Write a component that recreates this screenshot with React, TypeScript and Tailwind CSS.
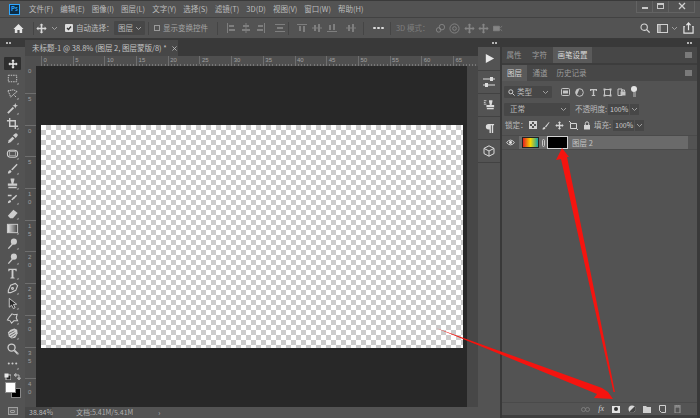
import React from "react";

const menus = ["文件(F)", "编辑(E)", "图像(I)", "图层(L)", "文字(Y)", "选择(S)", "滤镜(T)", "3D(D)", "视图(V)", "窗口(W)", "帮助(H)"];
const rulerNums = [0, 5, 10, 15, 20, 25, 30, 35, 40, 45, 50, 55, 60, 65];
const vNums = ["5", "0", "5", "10", "15", "20", "25", "30", "35", "40"];

const C = "#cdcdcd";
const toolShapes: React.ReactNode[] = [
  <rect key="m" x="2.5" y="3.5" width="9" height="7" fill="none" stroke={C} strokeDasharray="1.6 1" />,
  <path key="l" d="M2 4 L8 3 L12 5 L8 8 L5 11 L4 8 Z M8 8 L11 11" fill="none" stroke={C} strokeWidth="1" strokeDasharray="1.6 .7" />,
  <g key="w"><path d="M2 12 L8 6" stroke={C} strokeWidth="2" /><path d="M10 1 L10.8 3.2 L13 4 L10.8 4.8 L10 7 L9.2 4.8 L7 4 L9.2 3.2 Z" fill={C} /></g>,
  <path key="c" d="M4 1 V10 H13 M1 4 H10 V13" fill="none" stroke={C} strokeWidth="1.5" />,
  <g key="e" fill={C}><path d="M2 12 L3 9 L7 5 L9 7 L5 11 Z" /><path d="M7.5 3.5 L10 1.5 Q11 1 12 2 Q13 3 12.5 4 L10.5 6.5 Z" /></g>,
  <g key="h" fill="none" stroke={C}><rect x="1.5" y="3.5" width="11" height="7.5" rx="3.5" strokeWidth="1.2" /><rect x="4" y="5" width="6" height="4.5" strokeWidth=".7" /></g>,
  <g key="b" fill={C}><path d="M2 12.5 C2 10 3 9 4.5 8.5 L6 10 C5.5 11.5 4 12.5 2 12.5 Z" /><path d="M5.5 8 L11.5 2 L12.5 3 L7 9 Z" /></g>,
  <g key="s" fill={C}><path d="M5 1.5 H9 V3 L8 7 H12 V9.5 H2 V7 H6 L5 3 Z" /><rect x="2.5" y="10.5" width="9" height="1.6" /></g>,
  <g key="hb" fill={C}><path d="M2 12 C2 10 3 9 4.5 8.5 L5.5 10 C5 11.5 3.500 12 2 12 Z" /><path d="M5.500 8 L11 3 L12 4 L7 9 Z" /><path d="M2 3 H6 V4.500 H2 Z M7 6 L9 6 L9 7.500 Z" /></g>,
  <path key="er" d="M2 9.500 L8 3 L12.500 6.500 L7.500 12 H4.500 Z" fill={C} />,
  <g key="g"><rect x="1.500" y="2.500" width="11" height="9" fill="url(#tg)" stroke={C} /></g>,
  <g key="d" fill={C}><circle cx="8.500" cy="5" r="3.300" /><path d="M2 12 L6.500 7 L7.500 8 L3 13 Z" /></g>,
  <g key="bu" fill={C}><circle cx="8.500" cy="5" r="3.300" /><path d="M2 12 L6.500 7 L7.500 8 L3 13 Z" /></g>,
  <path key="t" d="M2.500 2 H11.500 V4.500 H10.500 L10 3.200 H8 V11 L9.300 11.500 V12.300 H4.700 V11.500 L6 11 V3.200 H4 L3.500 4.500 H2.500 Z" fill={C} />,
  <g key="p" fill="none" stroke={C} strokeWidth="1.200"><path d="M10 1.500 L12.500 4 L10.500 9 L5 11.500 L2.500 11.500 L2.500 9 L5 3.500 Z" /><circle cx="7" cy="7" r="1" /></g>,
  <path key="se" d="M3.500 1.500 V11 L6 8.800 L8 12.500 L9.800 11.500 L8 8 L11.500 7.800 Z" fill="#2b2b2b" stroke={C} />,
  <path key="sh" d="M6.500 2 L9 3 L12 2.500 L11 6.500 L12.500 9.500 L8.500 9.500 L6 12 L4.500 9.500 L1.500 8.500 L3.500 5.500 Z" fill="none" stroke={C} strokeWidth="1.100" />,
  <g key="ha"><path d="M2 6 L5 3 L9 1.500 L12 3 L12.500 7 L10 11.500 L6 12.500 L3 10 Z" fill={C} /><path d="M3 7 L9 4 M4 9.500 L10 6 M6 11.500 L11 8" stroke="#4a4a4a" strokeWidth=".8" /></g>,
  <g key="z" fill="none" stroke={C}><circle cx="6" cy="6" r="3.800" strokeWidth="1.400" /><path d="M9 9 L12.500 12.500" strokeWidth="2" /></g>,
  <g key="do" fill={C}><circle cx="3" cy="7" r="1.100" /><circle cx="7" cy="7" r="1.100" /><circle cx="11" cy="7" r="1.100" /></g>,
];

const Chev = ({ className = "", color = "#a0a0a0" }: { className?: string; color?: string }) => (
  <svg width="7" height="5" viewBox="0 0 7 5" className={`shrink-0 ${className}`}><path d="M1 1 L3.500 3.500 L6 1" fill="none" stroke={color} /></svg>
);
const Move4 = ({ size = 11, color = "#d8d8d8" }: { size?: number; color?: string }) => (
  <svg width={size} height={size} viewBox="0 0 14 14" className="shrink-0"><path d="M7 0.500 L9.500 3 H8 V6 H11 V4.500 L13.500 7 L11 9.500 V8 H8 V11 H9.500 L7 13.500 L4.500 11 H6 V8 H3 V9.500 L0.500 7 L3 4.500 V6 H6 V3 H4.500 Z" fill={color} /></svg>
);
const Sep = ({ cls }: { cls: string }) => <span className={`h-[13px] w-px shrink-0 bg-[#454545] ${cls}`} />;
const Grip = () => <span className="flex gap-[1px]"><span className="h-[2px] w-[2px] bg-[#b5b5b5]" /><span className="h-[2px] w-[2px] bg-[#b5b5b5]" /></span>;
const PanelMenu = () => <span className="ml-auto mr-[5px] h-[6px] w-[7px] self-center bg-[#7a7a7a]" />;

function Align({ d }: { d: string }) {
  return <span className="flex w-[15.300px] shrink-0 justify-center"><svg width="10" height="10" viewBox="0 0 10 10"><path d={d} fill="#7e7e7e" /></svg></span>;
}
const H1 = "M1 0 H2 V10 H1 Z M3 2 H8 V4 H3 Z M3 6 H9 V8 H3 Z";
const H2 = "M4.500 0 H5.500 V10 H4.500 Z M2 2 H8 V4 H2 Z M1 6 H9 V8 H1 Z";
const H3 = "M8 0 H9 V10 H8 Z M2 2 H7 V4 H2 Z M1 6 H7 V8 H1 Z";
const V1 = "M0 1 H10 V2 H0 Z M2 3 H4 V8 H2 Z M6 3 H8 V9 H6 Z";
const V2 = "M0 4.500 H10 V5.500 H0 Z M2 2 H4 V8 H2 Z M6 1 H8 V9 H6 Z";
const V3 = "M0 8 H10 V9 H0 Z M2 2 H4 V7 H2 Z M6 1 H8 V7 H6 Z";
const DIST = "M0 1 H10 V2 H0 Z M0 8 H10 V9 H0 Z M2 4 H8 V6 H2 Z";

export default function App() {
  return (
    <div className="flex h-[418px] w-[700px] flex-col overflow-hidden bg-[#393939] text-[#bcbcbc] [font-family:'Noto_Sans_CJK_SC','Liberation_Sans',sans-serif] relative">
      {/* Menu bar */}
      <div className="flex h-[18px] shrink-0 items-center border-b border-[#424242] border-t border-t-[#3a3a3a] bg-[#535353] pl-[9px] text-[7.500px]">
        <span className="mr-[9px] flex h-[11px] w-[11px] items-center justify-center border border-[#31a8ff] bg-[#0c2c44] text-[6px] font-bold leading-none text-[#31a8ff]">Ps</span>
        <div className="flex gap-[7px]">{menus.map((m) => <span key={m} className="whitespace-nowrap leading-none">{m}</span>)}</div>
        <div className="ml-auto mr-[5px] -mt-[5px] flex h-[12px] items-center border-b border-l border-r border-[#636363] text-[#c8c8c8]">
          <span className="flex h-full w-[16px] items-end justify-center border-r border-[#636363] pb-[3px]"><span className="h-[2px] w-[6px] bg-[#c8c8c8]" /></span>
          <span className="flex h-full w-[16px] items-center justify-center border-r border-[#636363]"><span className="h-[6px] w-[7px] border border-t-2 border-[#c8c8c8]" /></span>
          <span className="flex h-full w-[25px] items-center justify-center"><svg width="8" height="8" viewBox="0 0 8 8"><path d="M1 1 L7 7 M7 1 L1 7" stroke="#d0d0d0" strokeWidth="1.300" /></svg></span>
        </div>
      </div>
      {/* Options bar */}
      <div className="flex h-[21px] shrink-0 items-center border-b border-[#3a3a3a] bg-[#535353] text-[7.500px]">
        <svg width="11" height="11" viewBox="0 0 12 12" className="ml-[13px] shrink-0"><path d="M6 1 L11.500 6.500 H10 V11 H7.200 V7.500 H4.800 V11 H2 V6.500 H0.500 Z" fill="#e4e4e4" /></svg>
        <Sep cls="ml-[9px]" />
        <span className="ml-[2px]"><Move4 /></span>
        <Chev className="ml-[4px]" />
        <span className="ml-[7px] flex h-[8px] w-[8px] shrink-0 items-center justify-center rounded-[1px] bg-[#dcdcdc]"><svg width="6" height="6" viewBox="0 0 6 6"><path d="M1 3 L2.500 4.500 L5 1.500" fill="none" stroke="#333" strokeWidth="1.300" /></svg></span>
        <span className="ml-[3px] w-[38px] shrink-0 whitespace-nowrap">自动选择：</span>
        <span className="flex h-[14px] w-[31px] shrink-0 items-center justify-between rounded-[1px] bg-[#474747] pl-[4px] pr-[3px]">图层<Chev /></span>
        <Sep cls="ml-[3px]" />
        <span className="ml-[5px] h-[6px] w-[6px] shrink-0 border border-[#9a9a9a]" />
        <span className="ml-[3px] w-[54px] shrink-0 whitespace-nowrap text-[#a5a5a5]">显示变换控件</span>
        <Sep cls="" />
        <span className="ml-[5px] flex">
          <Align d={H1} /><Align d={H2} /><Align d={H3} /><span className="w-[3px]" /><Align d={DIST} />
        </span>
        <Sep cls="ml-[1px]" />
        <span className="ml-[5px] flex">
          <Align d={V1} /><Align d={V2} /><Align d={V3} /><span className="w-[3px]" /><Align d={V2} />
        </span>
        <Sep cls="ml-[5px]" />
        <span className="ml-[9px] flex gap-[1.500px]"><i className="h-[2.500px] w-[2.500px] rounded-full bg-[#dcdcdc]" /><i className="h-[2.500px] w-[2.500px] rounded-full bg-[#dcdcdc]" /><i className="h-[2.500px] w-[2.500px] rounded-full bg-[#dcdcdc]" /></span>
        <Sep cls="ml-[6px]" />
        <span className="ml-[5px] w-[36px] shrink-0 whitespace-nowrap text-[#7e7e7e]">3D 模式：</span>
        <span className="ml-[3px] flex items-center gap-[3.500px]">
          <svg width="11" height="11" viewBox="0 0 12 12"><g fill="none" stroke="#858585"><circle cx="7.500" cy="4.500" r="3" /><circle cx="4" cy="7.500" r="2.500" /></g></svg>
          <svg width="11" height="11" viewBox="0 0 12 12"><g fill="none" stroke="#858585"><circle cx="6" cy="6" r="5" /><circle cx="6" cy="6" r="2" /></g></svg>
          <Move4 color="#858585" />
          <Move4 color="#858585" />
          <svg width="11" height="11" viewBox="0 0 12 12"><path d="M0.500 3.500 H7 V8.500 H0.500 Z M8 5 L10 3.500 M8 7 L10 8.500" fill="#858585" stroke="#858585" strokeWidth=".8" /></svg>
        </span>
        <svg width="10" height="10" viewBox="0 0 12 12" className="ml-auto shrink-0"><circle cx="5" cy="5" r="3.800" fill="none" stroke="#d6d6d6" strokeWidth="1.300" /><path d="M8 8 L11.500 11.500" stroke="#d6d6d6" strokeWidth="1.500" /></svg>
        <span className="ml-[7px] flex h-[9px] w-[11px] shrink-0 border border-[#d0d0d0]"><span className="w-[3px] bg-[#9a9a9a]" /></span>
        <Chev className="ml-[3px]" />
        <svg width="11" height="12" viewBox="0 0 12 13" className="ml-[5px] mr-[6px] shrink-0"><path d="M2 5 H1 V12 H11 V5 H10 M6 9 V1.500 M3.800 3.500 L6 1 L8.200 3.500" fill="none" stroke="#e4e4e4" strokeWidth="1.300" /></svg>
      </div>
      {/* Body */}
      <div className="flex min-h-0 flex-1">
        {/* Toolbar */}
        <div className="flex w-[25px] shrink-0 flex-col">
          <div className="flex h-[8px] shrink-0 items-center pl-[6px]"><Grip /></div>
          <div className="flex flex-1 flex-col items-center bg-[#535353] pt-[10px]">
            <div className="flex h-[14px] shrink-0 items-start justify-center">
              <div className="flex h-[13px] w-[17px] items-center justify-center rounded-[1px] bg-[#2f2f2f]"><Move4 size={10} color="#ededed" /></div>
            </div>
            <svg width="0" height="0" className="absolute"><defs><linearGradient id="tg"><stop offset="0" stopColor="#e8e8e8" /><stop offset="1" stopColor="#444" /></linearGradient></defs></svg>
            {toolShapes.map((s, i) => (
              <span key={i} className="flex h-[15px] shrink-0 items-center justify-center">
                <svg width="13" height="13" viewBox="0 0 14 14">{s}<path d="M13.500 13.500 H11.500 L13.500 11.500 Z" fill="#bdbdbd" /></svg>
              </span>
            ))}
            <span className="flex h-[10px] w-[17px] shrink-0 items-center justify-between">
              <svg width="7" height="7" viewBox="0 0 7 7"><rect x="2" y="2" width="5" height="5" fill="#222" stroke="#ccc" /><rect x=".5" y=".5" width="4" height="4" fill="#e8e8e8" /></svg>
              <svg width="7" height="7" viewBox="0 0 7 7"><path d="M1 2 H5 V6 M0 2 L2 0.500 V3.500 Z M3.500 5 L5 7 L6.500 5 Z" fill="none" stroke="#ccc" strokeWidth=".8" /></svg>
            </span>
            <div className="relative mt-[1px] h-[17px] w-[16px] shrink-0">
              <span className="absolute left-[6px] top-[6px] h-[10px] w-[10px] border border-[#8a8a8a] bg-black" />
              <span className="absolute left-0 top-0 h-[11px] w-[11px] border border-[#8a8a8a] bg-white" />
            </div>
            <span className="mt-[8px] flex h-[8px] w-[10px] shrink-0 items-center justify-center border border-[#a0a0a0] bg-[#646464]"><span className="h-[3px] w-[5px] rounded-[1px] border border-[#a0a0a0]" /></span>
          </div>
        </div>
        {/* Document */}
        <div className="flex w-[453px] shrink-0 flex-col">
          <div className="flex h-[17px] shrink-0 items-end">
            <div className="flex h-[16px] w-[153px] items-center bg-[#474747] pl-[7px] text-[7.500px] text-[#c4c4c4]">
              <span className="whitespace-nowrap">未标题-1 @ 38.8% (图层 2, 图层蒙版/8) *</span>
              <svg width="5" height="5" viewBox="0 0 6 6" className="ml-[5px] shrink-0"><path d="M.5 .5 L5.500 5.500 M5.500 .5 L.5 5.500" stroke="#bbb" /></svg>
            </div>
          </div>
          <div className="flex h-[10px] shrink-0 flex-col overflow-hidden bg-[#4f4f4f] pl-[16px] [font-family:'Liberation_Sans',sans-serif]">
            <div className="flex h-[8px] shrink-0">
              {rulerNums.map((n) => <span key={n} className="w-[31.700px] shrink-0 border-l border-[#6e6e6e] pl-[1.500px] text-[6px] leading-[8px] text-[#a0a0a0]">{n}</span>)}
            </div>
            <div className="h-[2px] bg-[repeating-linear-gradient(90deg,#767676_0_1px,transparent_1px_3.170px)]" />
          </div>
          <div className="flex min-h-0 flex-1">
            <div className="flex w-[11px] shrink-0 flex-col overflow-hidden bg-[#4f4f4f] text-[6px] leading-[8px] text-[#a0a0a0] [font-family:'Liberation_Sans',sans-serif]">
              <div className="h-[27px] shrink-0 pl-[3px] pt-[1px]">0</div>
              {vNums.map((n, i) => (
                <div key={i} className="h-[31.700px] w-full shrink-0 border-t border-[#6e6e6e] pl-[3px] pt-[1px]">
                  {n.split("").map((c, j) => <span key={j} className="block">{c}</span>)}
                </div>
              ))}
            </div>
            <div className="flex flex-1 bg-[#282828] pl-[5px] pt-[59px]">
              <div className="h-[223px] w-[422px] bg-[repeating-conic-gradient(#cccccc_0_25%,#ffffff_0_50%)] bg-[length:10px_10px]" />
            </div>
            <div className="w-[11px] shrink-0 bg-[#474747]" />
          </div>
          <div className="flex h-[11px] shrink-0 items-center bg-[#535353] text-[7px] leading-none">
            <span className="flex h-full w-[27px] shrink-0 items-center bg-[#474747] pl-[4px]">38.84%</span>
            <span className="ml-[24px] whitespace-nowrap text-[#b0b0b0]">文档:5.41M/5.41M</span>
            <span className="ml-[25px]">›</span>
          </div>
        </div>
        {/* Dock */}
        <div className="flex w-[22px] shrink-0 flex-col">
          <div className="flex h-[8px] shrink-0 items-center justify-center pl-[10px]"><Grip /></div>
          <div className="flex flex-1 flex-col items-center bg-[#535353]">
            <span className="flex h-[24px] w-full items-center justify-center border-b border-[#424242]"><svg width="11" height="11" viewBox="0 0 12 12"><path d="M2 1 L11 6 L2 11 Z" fill="#e8e8e8" /></svg></span>
            <span className="flex h-[23px] w-full items-center justify-center border-b border-[#424242]"><svg width="12" height="12" viewBox="0 0 12 12" fill="#dcdcdc"><path d="M0 2.500 H12 V3.500 H0 Z M0 8.500 H12 V9.500 H0 Z" /><rect x="7" y="1" width="3" height="4" /><rect x="2" y="7" width="3" height="4" /></svg></span>
            <span className="flex h-[23px] w-full items-center justify-center border-b border-[#424242]"><svg width="12" height="12" viewBox="0 0 14 14" fill="#dcdcdc"><path d="M7 1.500 H11 V3 L10 7 H13 V9.500 H4 V7 H8 L7 3 Z" /><rect x="4.500" y="10.500" width="8" height="1.500" /><path d="M1 2 H4 M1 4 H3 M1 6 H4" stroke="#dcdcdc" /></svg></span>
            <span className="flex h-[23px] w-full items-center justify-center border-b border-[#424242]"><svg width="11" height="11" viewBox="0 0 12 12" fill="#dcdcdc"><path d="M5 1 H11 V2.500 H10 V11 H8.500 V2.500 H7.500 V11 H6 V7 H5 A3 3 0 0 1 5 1 Z" /></svg></span>
            <span className="flex h-[23px] w-full items-center justify-center border-b border-[#424242]"><svg width="12" height="12" viewBox="0 0 12 12" fill="none" stroke="#dcdcdc"><path d="M6 .8 L11 3.400 V8.600 L6 11.200 L1 8.600 V3.400 Z M1 3.400 L6 6 L11 3.400 M6 6 V11.200" /></svg></span>
          </div>
        </div>
        <div className="w-[2px] shrink-0" />
        {/* Panels */}
        <div className="flex w-[195px] shrink-0 flex-col">
          <div className="flex h-[8px] shrink-0 items-center justify-end pr-[5px]"><Grip /></div>
          <div className="flex h-[16px] shrink-0 items-stretch bg-[#474747] text-[7.500px]">
            <span className="flex w-[24px] items-center justify-center text-[#9d9d9d]">属性</span>
            <span className="flex w-[27px] items-center justify-center text-[#9d9d9d]">字符</span>
            <span className="flex w-[39px] items-center justify-center bg-[#5a5a5a] text-[#d6d6d6]">画笔设置</span>
            <PanelMenu />
          </div>
          <div className="h-[2px] shrink-0 bg-[#3d3d3d]" />
          <div className="flex h-[16px] shrink-0 items-stretch bg-[#474747] text-[7.500px]">
            <span className="flex w-[25px] items-center justify-center bg-[#5a5a5a] text-[#d6d6d6]">图层</span>
            <span className="flex w-[26px] items-center justify-center text-[#9d9d9d]">通道</span>
            <span className="flex w-[37px] items-center justify-center text-[#9d9d9d]">历史记录</span>
            <PanelMenu />
          </div>
          <div className="flex min-h-0 flex-1 flex-col bg-[#535353] text-[7.500px]">
            <div className="flex h-[20px] shrink-0 items-center pl-[2px] pt-[2px]">
              <span className="flex h-[12px] w-[48px] shrink-0 items-center rounded-[1px] bg-[#474747] pl-[4px] pr-[3px]">
                <svg width="7" height="7" viewBox="0 0 8 8" className="shrink-0"><circle cx="3.200" cy="3.200" r="2.300" fill="none" stroke="#ddd" /><path d="M5 5 L7.500 7.500" stroke="#ddd" /></svg>
                <span className="ml-[2px]">类型</span><Chev className="ml-auto" />
              </span>
              <div className="ml-[9px] flex items-center gap-[5px]">
                <svg width="9" height="8" viewBox="0 0 9 8"><rect x=".5" y=".5" width="8" height="7" rx="1" fill="none" stroke="#c4c4c4" /><rect x="2" y="2.500" width="5" height="3" fill="#c4c4c4" /></svg>
                <svg width="9" height="9" viewBox="0 0 9 9"><circle cx="4.500" cy="4.500" r="3.800" fill="none" stroke="#c4c4c4" /><path d="M4.500 .7 A3.800 3.800 0 0 0 1.800 7.200 Z" fill="#c4c4c4" /></svg>
                <svg width="9" height="9" viewBox="0 0 9 9"><path d="M1 1 H8 V3 H7 L6.500 2.300 H5.200 V7 H6.200 V8 H2.800 V7 H3.800 V2.300 H2.500 L2 3 H1 Z" fill="#c4c4c4" /></svg>
                <svg width="9" height="9" viewBox="0 0 9 9"><path d="M2 1.500 H7 M2 7.500 H7 M1.500 2 V7 M7.500 2 V7" stroke="#c4c4c4" /><rect x=".5" y=".5" width="2" height="2" fill="#c4c4c4" /><rect x="6.500" y=".5" width="2" height="2" fill="#c4c4c4" /><rect x=".5" y="6.500" width="2" height="2" fill="#c4c4c4" /><rect x="6.500" y="6.500" width="2" height="2" fill="#c4c4c4" /></svg>
                <svg width="9" height="10" viewBox="0 0 9 10"><path d="M1 2 H5 V8.500 H1 Z" fill="none" stroke="#c4c4c4" /><rect x="3.500" y="4.500" width="5" height="4" fill="#c4c4c4" /><path d="M4.500 4.500 V3 H7.500 V4.500" fill="none" stroke="#c4c4c4" /></svg>
              </div>
              <span className="ml-[5px] flex h-[12px] w-[6px] shrink-0 flex-col items-center"><span className="h-[6px] w-[6px] rounded-full bg-[#e4e4e4]" /><span className="h-[5px] w-[3px] bg-[#8a8a8a]" /></span>
            </div>
            <div className="flex h-[16px] shrink-0 items-center pl-[2px]">
              <span className="flex h-[13px] w-[66px] shrink-0 items-center rounded-[1px] bg-[#474747] pl-[6px] pr-[3px]">正常<Chev className="ml-auto" /></span>
              <span className="ml-[5px] w-[33px] shrink-0 whitespace-nowrap">不透明度:</span>
              <span className="flex h-[11px] w-[21px] shrink-0 items-center bg-[#474747] pl-[2px] text-[7px] text-[#d0d0d0]">100%</span>
              <span className="ml-[1px] flex h-[11px] w-[9px] shrink-0 items-center justify-center bg-[#474747]"><Chev /></span>
            </div>
            <div className="flex h-[16px] shrink-0 items-center pl-[3px]">
              <span className="w-[24px] shrink-0 whitespace-nowrap">锁定：</span>
              <svg width="8" height="8" viewBox="0 0 8 8" className="shrink-0"><rect x=".5" y=".5" width="7" height="7" fill="none" stroke="#d4d4d4" /><path d="M1 1 H3 V3 H1 Z M5 1 H7 V3 H5 Z M3 3 H5 V5 H3 Z M1 5 H3 V7 H1 Z M5 5 H7 V7 H5 Z" fill="#d4d4d4" /></svg>
              <svg width="8" height="9" viewBox="0 0 8 9" className="ml-[5px] shrink-0"><path d="M.5 8.500 C.5 7 1.500 6 2.500 6 L3.500 7 C3 8 2 8.500 .5 8.500 Z M3 5.500 L7 1 L7.500 1.500 L4 6.500 Z" fill="#d4d4d4" /></svg>
              <span className="ml-[5px]"><Move4 size={9} color="#d4d4d4" /></span>
              <svg width="9" height="9" viewBox="0 0 9 9" className="ml-[5px] shrink-0"><path d="M1.500 2.500 H7.500 V7.500 H1.500 Z M0 0 L2 2 M7 7 L9 9" fill="none" stroke="#d4d4d4" /></svg>
              <svg width="8" height="9" viewBox="0 0 8 9" className="ml-[5px] shrink-0"><rect x="1" y="4" width="6" height="4.500" fill="#d4d4d4" /><path d="M2.300 4 V2.500 A1.700 1.700 0 0 1 5.700 2.500 V4" fill="none" stroke="#d4d4d4" /></svg>
              <span className="ml-[3px] w-[19px] shrink-0 whitespace-nowrap">填充:</span>
              <span className="flex h-[11px] w-[21px] shrink-0 items-center bg-[#474747] pl-[2px] text-[7px] text-[#d0d0d0]">100%</span>
              <span className="ml-[1px] flex h-[11px] w-[9px] shrink-0 items-center justify-center bg-[#474747]"><Chev /></span>
            </div>
            <div className="mt-[2px] flex h-[15px] shrink-0 items-center border-y border-[#4a4a4a]">
              <span className="flex w-[17px] shrink-0 justify-center"><svg width="9" height="7" viewBox="0 0 10 8"><path d="M.5 4 Q5 -1.500 9.500 4 Q5 9.500 .5 4 Z" fill="none" stroke="#e4e4e4" /><circle cx="5" cy="4" r="1.700" fill="#e4e4e4" /></svg></span>
              <div className="mr-[9px] flex h-full flex-1 items-center bg-[#6a6a6a] pl-[3px]">
                <span className="h-[11px] w-[17px] shrink-0 border border-[#222] bg-[linear-gradient(90deg,#e32020,#f7d700_50%,#14a0a8)]" />
                <span className="flex w-[8px] shrink-0 justify-center"><span className="h-[8px] w-[3px] rounded-[2px] border border-[#c8c8c8]" /></span>
                <span className="h-[13px] w-[21px] shrink-0 border border-[#d4d4d4] bg-black" />
                <span className="ml-[4px] whitespace-nowrap text-[7.500px] text-[#c4c4c4]">图层 2</span>
              </div>
            </div>
            <div className="flex-1" />
            <div className="flex h-[13px] shrink-0 items-center justify-end border-t border-[#4a4a4a] bg-[#545454] pr-[16px]">
              <svg width="9" height="5" viewBox="0 0 9 5"><g fill="none" stroke="#7c7c7c"><circle cx="2.500" cy="2.500" r="2" /><circle cx="6.500" cy="2.500" r="2" /></g></svg>
              <span className="ml-[8px] text-[8px] italic leading-none text-[#d0d0d0] [font-family:'Liberation_Serif',serif]">fx</span>
              <span className="ml-[8px] flex h-[7px] w-[8px] shrink-0 items-center justify-center bg-[#e4e4e4]"><span className="h-[4px] w-[4px] rounded-full bg-[#333]" /></span>
              <svg width="8" height="8" viewBox="0 0 8 8" className="ml-[8px] shrink-0"><circle cx="4" cy="4" r="3.500" fill="#d8d8d8" /><path d="M6.500 1.500 L1.500 6.500 A3.500 3.500 0 0 0 6.500 1.500 Z" fill="#444" /></svg>
              <svg width="8" height="7" viewBox="0 0 8 7" className="ml-[7px] shrink-0"><path d="M0 0 H3 L4 1 H8 V7 H0 Z" fill="#d0d0d0" /></svg>
              <svg width="7" height="8" viewBox="0 0 7 8" className="ml-[8px] shrink-0"><path d="M.5 .5 H6.500 V7.500 H2.500 L.5 5.500 Z" fill="none" stroke="#d0d0d0" /></svg>
              <svg width="7" height="8" viewBox="0 0 7 8" className="ml-[8px] shrink-0"><path d="M0 1 H7 M2 1 V0 H5 V1 M1 2 H6 V8 H1 Z" fill="none" stroke="#9a9a9a" /></svg>
            </div>
            <div className="h-[3px] shrink-0 bg-[#3f3f3f]" />
          </div>
        </div>
        <div className="w-[3px] shrink-0" />
      </div>
      {/* Red arrows */}
      <svg className="pointer-events-none absolute left-0 top-0" width="700" height="418" viewBox="0 0 700 418">
        <polygon points="436,328 602,388 608,392 613,399 594,398 597,394" fill="#f5140f" />
        <polygon points="562,148 569,157 567,157 615,392 613.500,392 561,159 556,160" fill="#f5140f" />
      </svg>
    </div>
  );
}
